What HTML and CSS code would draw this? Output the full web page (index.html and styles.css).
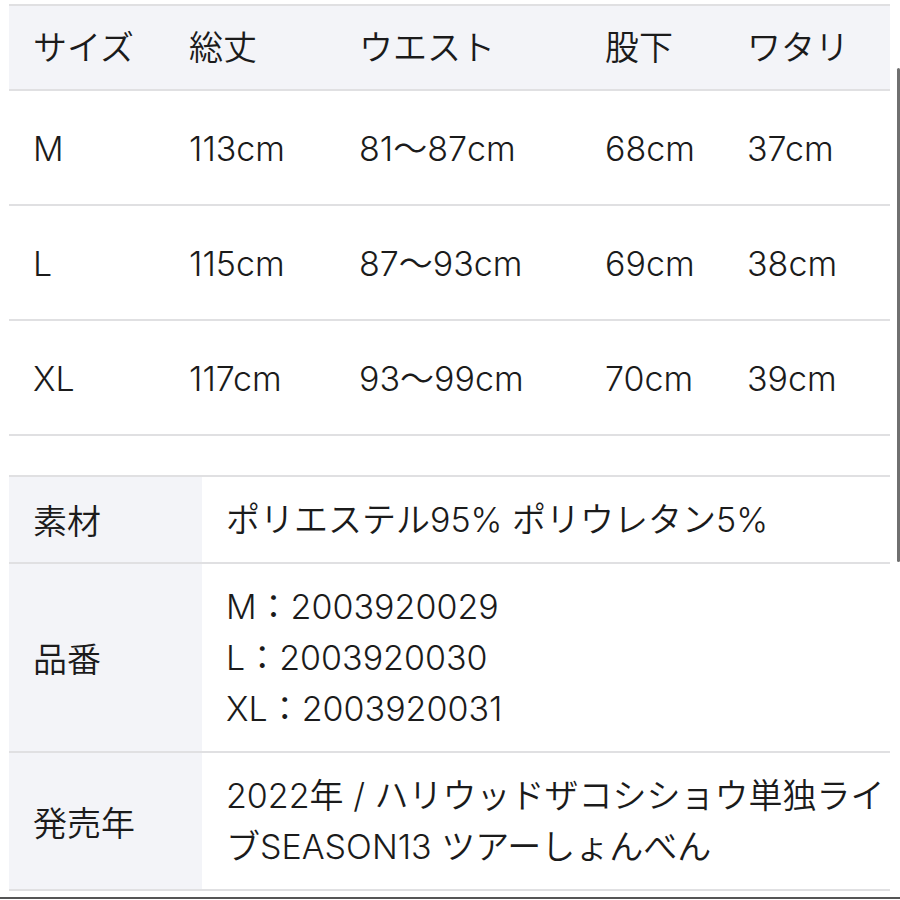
FILE: index.html
```html
<!DOCTYPE html>
<html lang="ja">
<head>
<meta charset="utf-8">
<title>サイズ表</title>
<link rel="stylesheet" href="styles.css">
</head>
<body>
<div class="page">
  <div class="size-table">
    <div class="row head">
      <div class="cell">サイズ</div>
      <div class="cell">総丈</div>
      <div class="cell">ウエスト</div>
      <div class="cell">股下</div>
      <div class="cell">ワタリ</div>
    </div>
    <div class="row">
      <div class="cell">M</div>
      <div class="cell">113cm</div>
      <div class="cell">81〜87cm</div>
      <div class="cell">68cm</div>
      <div class="cell">37cm</div>
    </div>
    <div class="row">
      <div class="cell">L</div>
      <div class="cell">115cm</div>
      <div class="cell">87〜93cm</div>
      <div class="cell">69cm</div>
      <div class="cell">38cm</div>
    </div>
    <div class="row">
      <div class="cell">XL</div>
      <div class="cell">117cm</div>
      <div class="cell">93〜99cm</div>
      <div class="cell">70cm</div>
      <div class="cell">39cm</div>
    </div>
  </div>

  <div class="spec-table">
    <div class="spec-row">
      <div class="label">素材</div>
      <div class="value">ポリエステル95% ポリウレタン5%</div>
    </div>
    <div class="spec-row">
      <div class="label">品番</div>
      <div class="value">M：2003920029<br>L：2003920030<br>XL：2003920031</div>
    </div>
    <div class="spec-row">
      <div class="label">発売年</div>
      <div class="value">2022年 / ハリウッドザコシショウ単独ライ<br>ブSEASON13 ツアーしょんべん</div>
    </div>
  </div>

  <div class="bottom-rule"></div>
  <div class="scroll-indicator"></div>
</div>
</body>
</html>
```

FILE: styles.css
```css
* {
  box-sizing: border-box;
}

html, body {
  margin: 0;
  padding: 0;
  background: #ffffff;
}

body {
  font-family: "Inter", "Noto Sans CJK JP", sans-serif;
  font-size: 34px;
  font-weight: 350;
  color: #1b1b1b;
  -webkit-font-smoothing: antialiased;
}

.page {
  position: relative;
  width: 900px;
  height: 900px;
  overflow: hidden;
  padding-top: 4px;
}

.size-table {
  margin-left: 9px;
  width: 881px;
  display: flex;
  flex-direction: column;
}

.row {
  display: grid;
  grid-template-columns: 156px 170px 246px 142px 1fr;
  align-items: center;
  height: 115px;
  border-bottom: 2px solid #e0e0e2;
  padding-top: 3px;
}

.row.head {
  height: 87px;
  border-top: 2px solid #e0e0e2;
  background: #f3f4f8;
  padding-top: 0;
}

.cell {
  padding-left: 24px;
  white-space: nowrap;
  line-height: 1;
}

.spec-table {
  margin-top: 39px;
  margin-left: 9px;
  width: 881px;
  border-top: 2px solid #e0e0e2;
  display: flex;
  flex-direction: column;
}

.spec-row {
  display: flex;
  border-bottom: 2px solid #e0e0e2;
}

.label {
  width: 193px;
  flex: none;
  background: #f3f4f8;
  padding-left: 24px;
  display: flex;
  align-items: center;
}

.value {
  flex: 1;
  padding: 17px 0 17px 24px;
  line-height: 51px;
  white-space: nowrap;
}

.bottom-rule {
  margin-top: 6px;
  height: 2px;
  background: #555555;
}

.scroll-indicator {
  position: absolute;
  right: 0;
  top: 68px;
  width: 3px;
  height: 494px;
  background: #707070;
  border-radius: 2px;
}
```
